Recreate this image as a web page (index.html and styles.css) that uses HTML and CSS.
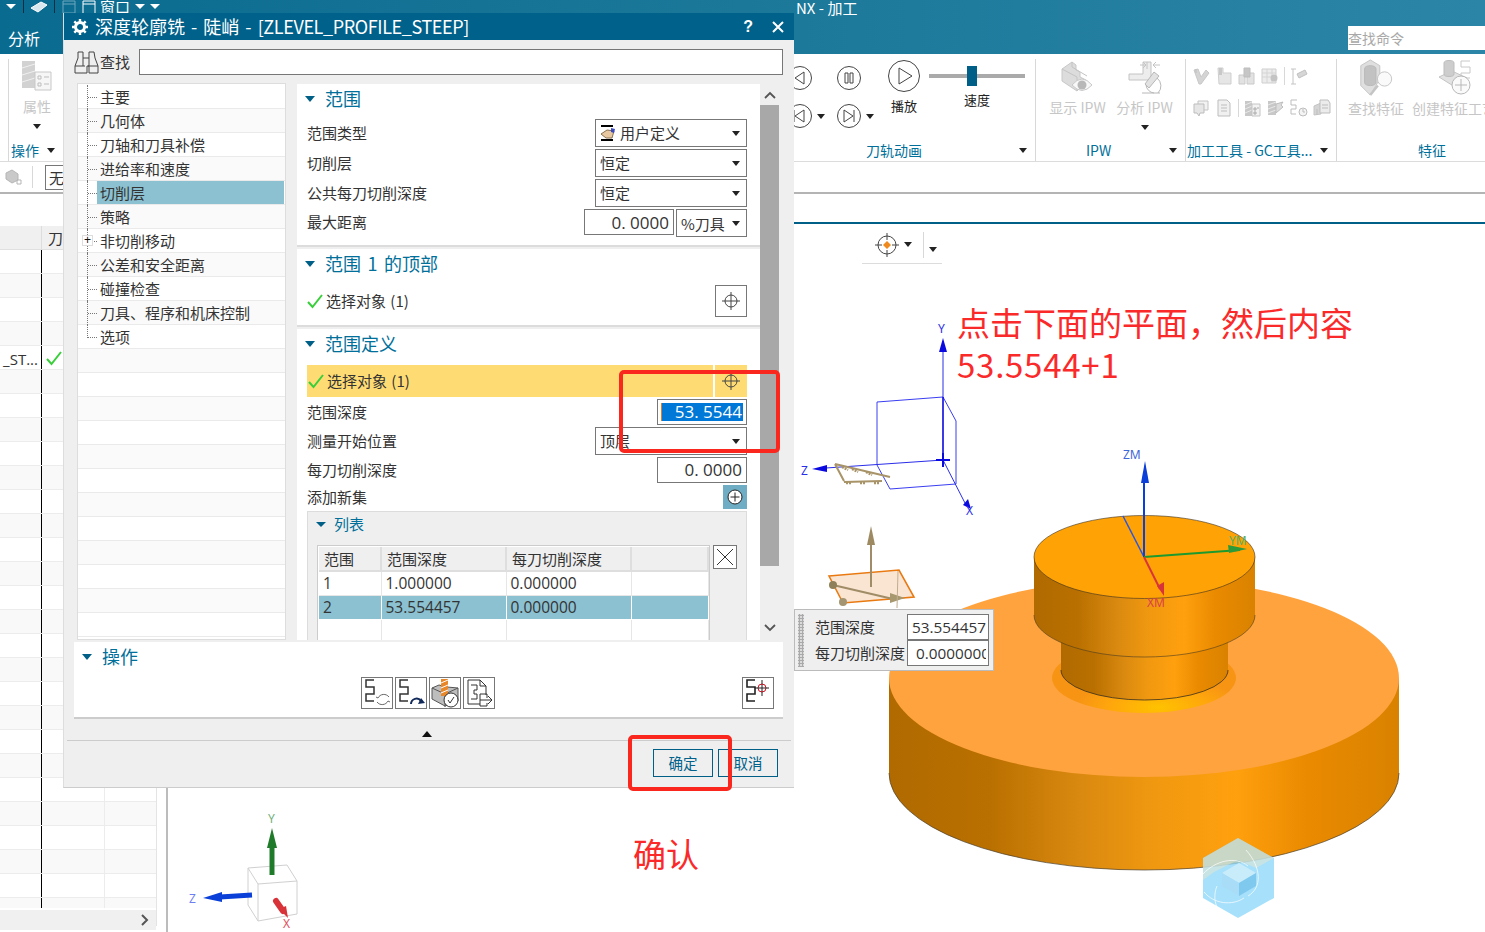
FILE: index.html
```html
<!DOCTYPE html>
<html lang="zh-CN">
<head>
<meta charset="utf-8">
<title>NX - 加工</title>
<link rel="stylesheet" href="styles.css">
</head>
<body>
<svg class="defs" width="0" height="0">
  <defs>
    <symbol id="steps" viewBox="0 0 32 32"><path d="M13 3H5v7h8v7H5v7h8" fill="none" stroke="#333" stroke-width="1.500"/></symbol>
    <symbol id="cross" viewBox="0 0 20 20"><circle cx="10" cy="10" r="6" fill="none" stroke="#444"/><path d="M10 1v18M1 10h18" stroke="#444"/></symbol>
    <symbol id="check" viewBox="0 0 16 16"><path d="M1 9l4.500 5L15 2" fill="none" stroke="#38cf3a" stroke-width="2"/></symbol>
    <symbol id="s-v" viewBox="0 0 18 18"><path d="M2 3l4-1 3 8 5-7 3 3-8 11H7z" fill="#d4d4d4" stroke="#c8c8c8"/><path d="M4 2v4" stroke="#bdbdbd"/></symbol>
    <symbol id="s-box" viewBox="0 0 18 18"><path d="M3 1h5v5h8v11H4z" fill="#e6e6e6" stroke="#cfcfcf"/><path d="M4 1h3v7H4z" fill="#c8c8c8"/></symbol>
    <symbol id="s-tool" viewBox="0 0 18 18"><path d="M1 8h6v9H1zM9 6h7v11H9z" fill="#e2e2e2" stroke="#cacaca"/><path d="M6 1h6v9H6z" fill="#c6c6c6" stroke="#bdbdbd"/></symbol>
    <symbol id="s-grid" viewBox="0 0 18 18"><path d="M1 2h14v14H1z" fill="#ececec" stroke="#cfcfcf"/><path d="M1 6h14M1 10h14M6 2v14M11 2v14" stroke="#d4d4d4"/><circle cx="13" cy="11" r="3.500" fill="#c4c4c4"/></symbol>
    <symbol id="s-pages" viewBox="0 0 18 18"><path d="M6 2h10v9H6z" fill="#f2f2f2" stroke="#c4c4c4"/><path d="M2 5h10v9H8l-1 3-2-3H2z" fill="#e6e6e6" stroke="#bdbdbd"/></symbol>
    <symbol id="s-doc" viewBox="0 0 18 18"><path d="M3 1h9l3 3v13H3z" fill="#f0f0f0" stroke="#bdbdbd"/><path d="M6 6h6M6 9h6M6 12h6" stroke="#bdbdbd"/></symbol>
    <symbol id="s-cyl" viewBox="0 0 18 18"><path d="M1 2h7v15H1z" fill="#c8c8c8"/><path d="M1 6l7-3M1 10l7-3M1 14l7-3" stroke="#e8e8e8"/><path d="M8 5h8v12H8z" fill="#f2f2f2" stroke="#c4c4c4"/><path d="M10 9h2v2h-2zM13 9h2M10 13h2v2h-2z" fill="none" stroke="#aaa"/></symbol>
    <symbol id="s-wrench" viewBox="0 0 18 18"><path d="M1 2h8v14H1z" fill="#c8c8c8"/><path d="M1 6l8-3M1 10l8-3M1 14l8-3" stroke="#e8e8e8"/><path d="M9 5l7-2-2 3 2 2-7 6z" fill="#dcdcdc" stroke="#bdbdbd"/></symbol>
    <symbol id="s-clock" viewBox="0 0 18 18"><path d="M7 1H1v5h5v4H1v5h5" fill="none" stroke="#bdbdbd"/><circle cx="13" cy="13" r="4" fill="#f4f4f4" stroke="#bdbdbd"/><path d="M13 10v3h2" fill="none" stroke="#bdbdbd"/></symbol>
    <symbol id="s-stack" viewBox="0 0 18 18"><path d="M1 7l7-3v11l-7 1z" fill="#d4d4d4" stroke="#c4c4c4"/><path d="M7 1h8l2 3v10H7z" fill="#ececec" stroke="#bdbdbd"/><path d="M9 6h6M9 9h6M4 10v6" stroke="#bdbdbd"/></symbol>
  </defs>
</svg>

<div class="app">
  <header class="titlebar">
    <div class="qat">
      <span class="qat-arrow"></span>
      <span class="qat-sep"></span>
      <svg class="qat-ico" width="20" height="13" viewBox="0 0 20 13"><path d="M2 8l10-6 6 3-9 7z" fill="#d8e8ee" stroke="#fff"/></svg>
      <span class="qat-sep"></span>
      <svg class="qat-ico dim" width="14" height="13" viewBox="0 0 14 13"><path d="M1 1h12v12H1zM1 4h12" fill="none" stroke="#6fa7bd"/></svg>
      <svg class="qat-ico win" width="14" height="13" viewBox="0 0 14 13"><path d="M1 13V1h12v12M1 4h12" fill="none" stroke="#fff"/></svg>
      <span class="qat-text">窗口</span>
      <span class="qat-arrow"></span>
      <span class="qat-arrow"></span>
      <span class="app-title">NX - 加工</span>
    </div>
    <div class="tabrow">
      <span class="tab">分析</span>
      <span class="cmdsearch">查找命令</span>
    </div>
  </header>

  <section class="ribbon">
    <div class="rgroup g-op">
      <div class="rbody col">
        <svg width="32" height="33" viewBox="0 0 32 33"><rect x="1" y="1" width="13" height="27" fill="#d2d2d2"/><path d="M1 8l13-4M1 15l13-4M1 22l13-4" stroke="#f0f0f0"/><path d="M14 12h16v18H14z" fill="#f6f6f6" stroke="#c8c8c8"/><path d="M17 16h3v3h-3zM17 23h3v3h-3zM23 17h5M23 24h5" fill="none" stroke="#bdbdbd"/></svg>
        <span class="rtext">属性</span>
        <span class="tri tri-mid"></span>
      </div>
      <div class="rlabel l-op"><span>操作</span><span class="tri"></span></div>
    </div>
    <div class="rspacer"></div>

    <div class="rgroup g-anim">
      <div class="rbody anim">
        <div class="transport">
          <div class="tcell"><svg class="circ" width="24" height="24" viewBox="0 0 24 24"><circle cx="12" cy="12" r="11.500" fill="none" stroke="#444"/><path d="M7 12l9-6v12z" fill="none" stroke="#444"/></svg></div>
          <div class="tcell"><svg class="circ" width="24" height="24" viewBox="0 0 24 24"><circle cx="12" cy="12" r="11.500" fill="none" stroke="#444"/><path d="M8 7h3v10H8zM13 7h3v10h-3z" fill="none" stroke="#444"/></svg></div>
          <div class="tcell"><svg class="circ" width="24" height="24" viewBox="0 0 24 24"><circle cx="12" cy="12" r="11.500" fill="none" stroke="#444"/><path d="M7 12l9-6v12zM6 6v12" fill="none" stroke="#444"/></svg><span class="tri"></span></div>
          <div class="tcell"><svg class="circ" width="24" height="24" viewBox="0 0 24 24"><circle cx="12" cy="12" r="11.500" fill="none" stroke="#444"/><path d="M7 6l9 6-9 6zM17 6v12" fill="none" stroke="#444"/></svg><span class="tri"></span></div>
        </div>
        <div class="play">
          <svg width="32" height="32" viewBox="0 0 32 32"><circle cx="16" cy="16" r="15.500" fill="none" stroke="#444"/><path d="M11 8l13 8-13 8z" fill="none" stroke="#444"/></svg>
          <span class="rtext dark">播放</span>
        </div>
        <div class="speed">
          <div class="slider"><span class="thumb"></span></div>
          <span class="rtext dark">速度</span>
        </div>
      </div>
      <div class="rlabel l-anim"><span>刀轨动画</span><span class="tri"></span></div>
    </div>

    <div class="rgroup g-ipw">
      <div class="rbody items">
        <div class="ritem">
          <svg width="36" height="36" viewBox="0 0 36 36"><path d="M2 9L12 2l4 3v5l4 2v5l6 3-9 11L2 21z" fill="#dcdcdc" stroke="#c8c8c8"/><path d="M2 9l15 8v14M12 2v5l15 9" fill="none" stroke="#c4c4c4"/><path d="M12 25q10-12 20 0q-10 11-20 0z" fill="#f8f8f8" stroke="#c8c8c8"/><circle cx="22" cy="25" r="4.500" fill="#b8b8b8"/></svg>
          <span class="rtext">显示 IPW</span>
        </div>
        <div class="ritem">
          <svg width="36" height="36" viewBox="0 0 36 36"><path d="M2 14h14V2h8v18H2z" fill="#ededed" stroke="#c4c4c4"/><path d="M20 2v7M13 5h6M26 5h7M29 2l-3 3 3 3M16 2l3 3-3 3" fill="none" stroke="#c4c4c4"/><path d="M27 12l5 4-10 12-4-4z" fill="#e2e2e2" stroke="#b8b8b8"/><path d="M15 33h18M19 25a9 9 0 0 0 8 8M30 18a10 10 0 0 1 1 15" fill="none" stroke="#b8b8b8"/></svg>
          <span class="rtext">分析 IPW</span>
          <span class="tri tri-mid"></span>
        </div>
      </div>
      <div class="rlabel l-ipw"><span>IPW</span><span class="tri"></span></div>
    </div>

    <div class="rgroup g-tools">
      <div class="rbody tools">
        <div class="toolrow">
          <svg width="18" height="18"><use href="#s-v"/></svg>
          <svg width="18" height="18"><use href="#s-box"/></svg>
          <svg width="18" height="18"><use href="#s-tool"/></svg>
          <svg width="18" height="18"><use href="#s-grid"/></svg>
          <span class="toolsep"></span>
          <svg width="18" height="18" viewBox="0 0 18 18"><path d="M3 2v15M1 2h5M1 17h5" stroke="#c4c4c4" fill="none"/><path d="M7 7l8-4 2 4-8 4z" fill="#d6d6d6" stroke="#c0c0c0"/></svg>
        </div>
        <div class="toolrow">
          <svg width="18" height="18"><use href="#s-pages"/></svg>
          <svg width="18" height="18"><use href="#s-doc"/></svg>
          <span class="toolsep"></span>
          <svg width="18" height="18"><use href="#s-cyl"/></svg>
          <svg width="18" height="18"><use href="#s-wrench"/></svg>
          <svg width="18" height="18"><use href="#s-clock"/></svg>
          <svg width="18" height="18"><use href="#s-stack"/></svg>
        </div>
      </div>
      <div class="rlabel l-tools"><span>加工工具 - GC工具...</span><span class="tri"></span></div>
    </div>

    <div class="rgroup g-feat">
      <div class="rbody items">
        <div class="ritem feat">
          <svg class="shift-a" width="36" height="40" viewBox="0 0 36 40"><path d="M2 7l10-6 10 6v14l-10 17L2 28z" fill="#dfdfdf" stroke="#c4c4c4"/><path d="M6 10a6 3 0 0 1 12 0v15a6 3 0 0 1-12 0z" fill="#c2c2c2" stroke="#b8b8b8"/><path d="M12 38l8-10" stroke="#c4c4c4" stroke-width="2.500"/><circle cx="27" cy="21" r="7.500" fill="#fafafa" stroke="#c4c4c4"/></svg>
          <span class="rtext">查找特征</span>
        </div>
        <div class="ritem feat">
          <svg class="shift" width="40" height="36" viewBox="0 0 40 36"><path d="M1 17l13-6 15 7-12 9z" fill="#e2e2e2" stroke="#c4c4c4"/><path d="M6 3a5 2.500 0 0 1 10 0v11a5 2.500 0 0 1-10 0z" fill="#cdcdcd" stroke="#bdbdbd"/><path d="M32 1h-9v6h9v6h-9v5h9" fill="none" stroke="#c8c8c8"/><circle cx="23" cy="25" r="9" fill="#fafafa" stroke="#b8b8b8"/><path d="M23 19v12M17 25h12" stroke="#b8b8b8"/></svg>
          <span class="rtext">创建特征工艺</span>
        </div>
      </div>
      <div class="rlabel l-feat"><span>特征</span></div>
    </div>
  </section>

  <div class="subbar">
    <svg width="18" height="18" viewBox="0 0 18 18"><path d="M2 5l6-3 6 4v6l-6 3-6-4z" fill="#c9c9c9" stroke="#b5b5b5"/><path d="M13 12h4v4h-4z" fill="none" stroke="#b5b5b5"/></svg>
    <span class="subsep"></span>
    <span class="subselect">无</span>
  </div>

  <main class="main">
    <aside class="navwrap">
      <div class="nav">
        <div class="navhead"><span class="c1"></span><span class="c2">刀</span></div>
        <div class="navrows">
          <div class="nrow"><span class="c1"></span><span class="c2"></span></div>
          <div class="nrow alt"><span class="c1"></span><span class="c2"></span></div>
          <div class="nrow"><span class="c1"></span><span class="c2"></span></div>
          <div class="nrow alt"><span class="c1"></span><span class="c2"></span></div>
          <div class="nrow"><span class="c1 trunc">_ST...</span><span class="c2"><svg class="navcheck" width="16" height="16"><use href="#check"/></svg></span></div>
          <div class="nrow alt"><span class="c1"></span><span class="c2"></span></div>
          <div class="nrow"><span class="c1"></span><span class="c2"></span></div>
          <div class="nrow alt"><span class="c1"></span><span class="c2"></span></div>
          <div class="nrow"><span class="c1"></span><span class="c2"></span></div>
          <div class="nrow alt"><span class="c1"></span><span class="c2"></span></div>
          <div class="nrow"><span class="c1"></span><span class="c2"></span></div>
          <div class="nrow alt"><span class="c1"></span><span class="c2"></span></div>
          <div class="nrow"><span class="c1"></span><span class="c2"></span></div>
          <div class="nrow alt"><span class="c1"></span><span class="c2"></span></div>
          <div class="nrow"><span class="c1"></span><span class="c2"></span></div>
          <div class="nrow alt"><span class="c1"></span><span class="c2"></span></div>
          <div class="nrow"><span class="c1"></span><span class="c2"></span></div>
          <div class="nrow alt"><span class="c1"></span><span class="c2"></span></div>
          <div class="nrow"><span class="c1"></span><span class="c2"></span></div>
          <div class="nrow alt"><span class="c1"></span><span class="c2"></span></div>
          <div class="nrow"><span class="c1"></span><span class="c2"></span></div>
          <div class="nrow alt"><span class="c1"></span><span class="c2"></span></div>
          <div class="nrow"><span class="c1"></span><span class="c2"></span></div>
          <div class="nrow alt"><span class="c1"></span><span class="c2"></span></div>
          <div class="nrow"><span class="c1"></span><span class="c2"></span></div>
          <div class="nrow alt"><span class="c1"></span><span class="c2"></span></div>
          <div class="nrow"><span class="c1"></span><span class="c2"></span></div>
          <div class="nrow alt"><span class="c1"></span><span class="c2"></span></div>
        </div>
        <div class="hscroll"><svg width="10" height="12" viewBox="0 0 10 12"><path d="M2 1l5 5-5 5" fill="none" stroke="#555" stroke-width="2"/></svg></div>
      </div>
    </aside>

    <div class="gfx">
      <div class="gfxtools">
        <svg width="24" height="24" viewBox="0 0 24 24"><circle cx="12" cy="12" r="9" fill="none" stroke="#444"/><path d="M12 0v7M12 17v7M0 12h7M17 12h7" stroke="#444"/><path d="M12 8l4 4-4 4-4-4z" fill="#f08a1c"/></svg>
        <span class="tri"></span>
        <span class="gfxsep"></span>
        <span class="tri tri-low"></span>
      </div>

      <svg class="scene" width="1317" height="708" viewBox="168 224 1317 708">
        <defs>
          <linearGradient id="body" x1="0" x2="1" y1="0" y2="0">
            <stop offset="0" stop-color="#b06a00"/>
            <stop offset=".2" stop-color="#ba7000"/>
            <stop offset=".38" stop-color="#da8a10"/>
            <stop offset=".52" stop-color="#f09810"/>
            <stop offset=".68" stop-color="#ffa00e"/>
            <stop offset=".82" stop-color="#ea8a00"/>
            <stop offset="1" stop-color="#d98200"/>
          </linearGradient>
          <radialGradient id="fillet" cx=".58" cy=".92" r=".45">
            <stop offset="0" stop-color="#ffc200"/>
            <stop offset=".6" stop-color="#ffa60c"/>
            <stop offset="1" stop-color="#f79414"/>
          </radialGradient>
        </defs>

        <!-- part -->
        <path d="M889 678V773A255 97 0 0 0 1399 773V678Z" fill="url(#body)"/>
        <path d="M889 773A255 97 0 0 0 1399 773" fill="none" stroke="#4a4030" stroke-width=".7"/>
        <ellipse cx="1144" cy="678" rx="255" ry="99" fill="#ffa33e"/>
        <ellipse cx="1144" cy="678" rx="92" ry="35" fill="url(#fillet)"/>
        <path d="M1061 630V670A83.500 30 0 0 0 1228 670V630Z" fill="url(#body)"/>
        <path d="M1061 670A83.500 30 0 0 0 1228 670" fill="none" stroke="#3a3020" stroke-width=".8"/>
        <path d="M1034 557V615A110.500 42 0 0 0 1255 615V557Z" fill="url(#body)"/>
        <path d="M1034 615A110.500 42 0 0 0 1255 615" fill="none" stroke="#4a3a20" stroke-width=".6"/>
        <ellipse cx="1144.500" cy="557" rx="110.500" ry="41.500" fill="#ffa206" stroke="#3a3020" stroke-width=".6"/>

        <!-- work coordinate system -->
        <path d="M1144 557L1123 516" stroke="#2a55e0" stroke-width="1.500"/>
        <path d="M1144 557V480" stroke="#0a3fd8" stroke-width="2"/>
        <path d="M1145 461l-4 22h8z" fill="#0a3fd8"/>
        <path d="M1144 557L1240 550" stroke="#1d9a2e" stroke-width="2"/>
        <path d="M1247 549l-19-4 1 8z" fill="#2d9a3a"/>
        <path d="M1144 557L1160 589" stroke="#d9333a" stroke-width="2"/>
        <path d="M1164 596l-7-10 7-4z" fill="#d9333a"/>
        <text class="axis ax-b" x="1123" y="459">ZM</text>
        <text class="axis ax-g" x="1229" y="545">YM</text>
        <text class="axis ax-r" x="1147" y="607">XM</text>

        <!-- csys wireframe -->
        <path d="M877 465V402L943 397L956 421V484L890 489L877 465" fill="none" stroke="#3a3ef0"/>
        <path d="M826 468L943 460M943 460L966 505M943 397V352" fill="none" stroke="#2a2ee8"/>
        <path d="M943 397V460" stroke="#0a0ae0" stroke-width="1.600"/>
        <path d="M936 460h14M943 453v14" stroke="#0a0ae0" stroke-width="2"/>
        <path d="M943 338l-4 14h8z" fill="#0a0ae0"/>
        <path d="M812 469l15-4v7z" fill="#0a0ae0"/>
        <path d="M971 509l-8-4 5-6z" fill="#0a0ae0"/>
        <text class="axis ax-b2" x="938" y="333">Y</text>
        <text class="axis ax-b2" x="801" y="475">Z</text>
        <text class="axis ax-b2" x="966" y="515">X</text>
        <path d="M835 464L890 477M835 464L844 481M844 482L882 481" fill="none" stroke="#a89468" stroke-width="2"/>
        <path d="M842 467l6 3M852 469l6 3M866 472l6 3M846 483h6M860 483h6M874 483h5" stroke="#a89468" stroke-width="2.500" stroke-dasharray="2 1"/>

        <!-- plane handle -->
        <path d="M829 576L899 570L914 597L843 603Z" fill="#fae5d3" stroke="#e97a12" stroke-width="1.600"/>
        <path d="M871 587V545" stroke="#a08c66" stroke-width="2"/>
        <path d="M871 526l-4 19h8z" fill="#9d8a62"/>
        <path d="M833 585L893 599" stroke="#a08c66" stroke-width="2"/>
        <path d="M905 598l-15-5v10z" fill="#a89870"/>
        <circle cx="833" cy="585" r="4" fill="#8f7f58"/>
        <circle cx="843" cy="602" r="4" fill="#a39572"/>
        <path d="M898 571L897 608" stroke="#c0ad90" fill="none"/>

        <!-- watermark -->
        <polygon points="1238,838 1274,858 1274,898 1238,918 1203,898 1203,858" fill="#8ed7f8" fill-opacity=".78"/>
        <path d="M1203 858L1238 838 1274 858 1256 868 1238 860 1214 872 1203 880Z" fill="#f2e6c8" fill-opacity=".45"/>
        <path d="M1203 874C1216 860 1236 856 1248 866M1246 850C1262 868 1262 888 1248 896M1204 892C1214 904 1232 906 1244 898M1217 886C1212 898 1216 912 1226 916" fill="none" stroke="#fff" stroke-opacity=".7"/>
        <polygon points="1239,863 1256,873 1239,883 1222,873" fill="#c9ecfb"/>
        <polygon points="1222,873 1239,883 1239,896 1222,886" fill="#a8dcf7"/>
        <polygon points="1256,873 1239,883 1239,896 1256,886" fill="#7fc9ef"/>

        <!-- triad -->
        <path d="M248 868L287 865 297 881V914L258 921 248 905Z" fill="#fff" stroke="#d0d0d0"/>
        <path d="M248 868L258 884 297 881M258 884V921" fill="none" stroke="#d0d0d0"/>
        <path d="M272 875V848" stroke="#1f7a2a" stroke-width="5"/>
        <path d="M272 828l-5 20h10z" fill="#1f7a2a"/>
        <path d="M252 895L220 897" stroke="#0a3fd8" stroke-width="5"/>
        <path d="M203 898l19-6v10z" fill="#0a3fd8"/>
        <path d="M276 901L283 911" stroke="#d9333a" stroke-width="6" stroke-linecap="round"/>
        <path d="M288 918l-9-9 7-3z" fill="#d9333a"/>
        <text class="axis ax-tg" x="268" y="823">Y</text>
        <text class="axis ax-tb" x="189" y="903">Z</text>
        <text class="axis ax-tr" x="283" y="928">X</text>
      </svg>
    </div>
  </main>
</div>

<!-- dialog -->
<section class="dialog">
  <div class="dlgtitle">
    <svg class="gear" width="16" height="16" viewBox="0 0 16 16"><circle cx="8" cy="8" r="4.500" fill="none" stroke="#fff" stroke-width="3"/><path d="M8 0v3M8 13v3M0 8h3M13 8h3M2.300 2.300l2 2M11.700 11.700l2 2M13.700 2.300l-2 2M4.300 11.700l-2 2" stroke="#fff" stroke-width="2.400"/></svg>
    <span class="dlgname">深度轮廓铣 - 陡峭 - <span class="latin">[ZLEVEL_PROFILE_STEEP]</span></span>
    <span class="dlghelp">?</span>
    <svg width="14" height="14" viewBox="0 0 14 14"><path d="M2 2l10 10M12 2L2 12" stroke="#fff" stroke-width="2"/></svg>
  </div>

  <div class="dlgsearch">
    <svg width="25" height="24" viewBox="0 0 25 24"><path d="M4 2h5v6h6V2h5l1 6 3 8v7h-9v-7h-2v7H1v-7l3-8zM1 16h10M14 16h10M9 8v8M15 8v8" fill="none" stroke="#444"/></svg>
    <span class="dlgfind">查找</span>
    <span class="dlginput"></span>
  </div>

  <div class="dlgbody">
    <div class="tree">
      <div class="trow"><span class="twig"></span><span class="tlabel">主要</span></div>
      <div class="trow alt"><span class="twig"></span><span class="tlabel">几何体</span></div>
      <div class="trow"><span class="twig"></span><span class="tlabel">刀轴和刀具补偿</span></div>
      <div class="trow alt"><span class="twig"></span><span class="tlabel">进给率和速度</span></div>
      <div class="trow"><span class="twig"></span><span class="tlabel selected">切削层</span></div>
      <div class="trow alt"><span class="twig"></span><span class="tlabel">策略</span></div>
      <div class="trow"><span class="twig"><span class="plus">+</span></span><span class="tlabel">非切削移动</span></div>
      <div class="trow alt"><span class="twig"></span><span class="tlabel">公差和安全距离</span></div>
      <div class="trow"><span class="twig"></span><span class="tlabel">碰撞检查</span></div>
      <div class="trow alt"><span class="twig"></span><span class="tlabel">刀具、程序和机床控制</span></div>
      <div class="trow"><span class="twig last"></span><span class="tlabel">选项</span></div>
      <div class="trow alt"></div><div class="trow"></div><div class="trow alt"></div><div class="trow"></div>
      <div class="trow alt"></div><div class="trow"></div><div class="trow alt"></div><div class="trow"></div>
      <div class="trow alt"></div><div class="trow"></div><div class="trow alt"></div><div class="trow"></div>
    </div>

    <div class="pane">
      <div class="sect">
        <h3 class="secthead first"><span class="disc"></span>范围</h3>
        <div class="frow"><span>范围类型</span>
          <span class="sel w152"><svg class="selico" width="16" height="16" viewBox="0 0 16 16"><path d="M1 1h12M1 15h12" stroke="#000" stroke-width="2"/><path d="M1 9l6-4 7 1-2 7H6z" fill="#e8c8a0" stroke="#8a7050"/><path d="M11 3l4 1-1 4-3-1z" fill="#3a4bc0"/></svg><span class="seltext">用户定义</span><span class="tri"></span></span></div>
        <div class="frow"><span>切削层</span><span class="sel w152"><span class="seltext">恒定</span><span class="tri"></span></span></div>
        <div class="frow"><span>公共每刀切削深度</span><span class="sel w152"><span class="seltext">恒定</span><span class="tri"></span></span></div>
        <div class="frow last"><span>最大距离</span>
          <span class="pair"><span class="num w90">0. 0000</span><span class="sel w71"><span class="seltext">%刀具</span><span class="tri"></span></span></span></div>
      </div>

      <div class="sect">
        <h3 class="secthead"><span class="disc"></span>范围 1 的顶部</h3>
        <div class="frow pick"><span class="picklabel"><svg width="16" height="16"><use href="#check"/></svg>选择对象 (1)</span>
          <span class="pickbtn"><svg width="20" height="20"><use href="#cross"/></svg></span></div>
      </div>

      <div class="sect open">
        <h3 class="secthead"><span class="disc"></span>范围定义</h3>
        <div class="yellow">
          <span class="picklabel grow"><svg width="16" height="16"><use href="#check"/></svg>选择对象 (1)</span>
          <span class="ybtn"><svg width="20" height="20"><use href="#cross"/></svg></span>
        </div>
        <div class="frow r26"><span>范围深度</span><span class="num w90 active"><span class="selection">53. 5544</span></span></div>
        <div class="frow"><span>测量开始位置</span><span class="sel w152"><span class="seltext">顶层</span><span class="tri"></span></span></div>
        <div class="frow r26"><span>每刀切削深度</span><span class="num w90">0. 0000</span></div>
        <div class="frow r24"><span>添加新集</span>
          <span class="addbtn"><svg width="16" height="16" viewBox="0 0 16 16"><circle cx="8" cy="8" r="7" fill="#fff" stroke="#222"/><path d="M8 3.500v9M3.500 8h9" stroke="#222"/></svg></span></div>

        <div class="listbox">
          <h4 class="listhead"><span class="disc small"></span>列表</h4>
          <div class="listinner">
            <div class="tblwrap">
              <table class="tbl">
                <thead><tr><th>范围</th><th>范围深度</th><th>每刀切削深度</th><th></th></tr></thead>
                <tbody>
                  <tr><td>1</td><td>1.000000</td><td>0.000000</td><td></td></tr>
                  <tr class="on"><td>2</td><td>53.554457</td><td>0.000000</td><td></td></tr>
                  <tr><td></td><td></td><td></td><td></td></tr>
                </tbody>
              </table>
            </div>
            <span class="delbtn"><svg width="20" height="20" viewBox="0 0 20 20"><path d="M2 2l16 16M18 2L2 18" stroke="#333"/></svg></span>
          </div>
        </div>
      </div>
    </div>

    <div class="vscroll">
      <svg class="chev" width="12" height="8" viewBox="0 0 12 8"><path d="M1 7l5-5 5 5" fill="none" stroke="#555" stroke-width="1.800"/></svg>
      <span class="vthumb"></span>
      <svg class="chev" width="12" height="8" viewBox="0 0 12 8"><path d="M1 1l5 5 5-5" fill="none" stroke="#555" stroke-width="1.800"/></svg>
    </div>
  </div>

  <div class="ops">
    <h3 class="secthead"><span class="disc"></span>操作</h3>
    <div class="opsrow">
      <span class="opbtn"><svg width="32" height="32"><use href="#steps"/><path d="M28 20a6.500 6.500 0 0 0-11 1l-2-1M16 25a6.500 6.500 0 0 0 11-1l2 1" fill="none" stroke="#666"/></svg></span>
      <span class="opbtn"><svg width="32" height="32"><use href="#steps"/><path d="M16 27a5.500 5.500 0 0 1 10-3" fill="none" stroke="#122a5a" stroke-width="2"/><path d="M30 26l-7 1 3-6z" fill="#122a5a"/></svg></span>
      <span class="opbtn"><svg width="32" height="32" viewBox="0 0 32 32"><path d="M3 11l7-3 8 2 11 1v13l-13 5-13-7z" fill="#bdbdbd" stroke="#555"/><path d="M3 11l13 6v13M16 17l13-6" fill="none" stroke="#555"/><rect x="12" y="2" width="7" height="17" fill="#e8862a"/><path d="M12 6l7-3M12 11l7-3M12 16l7-3" stroke="#fff"/><circle cx="22" cy="23" r="7" fill="#fff" stroke="#333"/><path d="M19 23l2 3 4-6" fill="none" stroke="#333"/></svg></span>
      <span class="opbtn"><svg width="32" height="32" viewBox="0 0 32 32"><path d="M5 3h12l6 6v9M5 3v24h12" fill="none" stroke="#333"/><path d="M17 3v6h6M8 8h6v5h-3v4h3v5H8" fill="none" stroke="#333"/><path d="M17 17v12h7v-3M17 17h7v4M17 23h11M25 19l4 4-4 4" fill="none" stroke="#333"/></svg></span>
      <span class="opbtn endbtn"><svg width="32" height="32" viewBox="0 0 32 32"><path d="M13 3H5v7h8v7H5v7h8" fill="none" stroke="#222" stroke-width="1.600"/><circle cx="20" cy="11" r="4" fill="none" stroke="#e01020"/><path d="M20 3v16M13 11h14" stroke="#222"/></svg></span>
    </div>
  </div>

  <div class="collapse"><span class="uptri"></span></div>
  <div class="dlgfoot">
    <button class="btn" type="button">确定</button>
    <button class="btn" type="button">取消</button>
  </div>
</section>

<!-- on-canvas parameter box -->
<section class="hud">
  <span class="grip"></span>
  <div class="hudgrid">
    <span class="hudlabel">范围深度</span><span class="hudval">53.554457</span>
    <span class="hudlabel">每刀切削深度</span><span class="hudval clip"><span class="clipbox">0.0000000</span></span>
  </div>
</section>

<!-- annotations -->
<p class="note note-main">点击下面的平面，然后内容<br><span class="formula">53.5544+1</span></p>
<p class="note note-ok">确认</p>
<span class="mark mark-depth"></span>
<span class="mark mark-ok"></span>
</body>
</html>
```

FILE: styles.css
```css
* { box-sizing: border-box; }
html, body { margin: 0; padding: 0; }
body {
  position: relative;
  width: 1485px;
  height: 932px;
  overflow: hidden;
  background: #fff;
  color: #333;
  font-family: "Noto Sans CJK SC", "Noto Sans", sans-serif;
  font-size: 15px;
  line-height: 20px;
}
.defs { position: absolute; }
svg { display: block; flex: none; }
h3, h4, p { margin: 0; font-weight: 400; }

.app { display: flex; flex-direction: column; height: 932px; }

/* title bar */
.titlebar {
  height: 54px;
  flex: none;
  background: linear-gradient(90deg, #0a6b90, #1b7899 50%, #2b85a7);
  color: #fff;
  overflow: hidden;
}
.qat { display: flex; align-items: flex-start; height: 26px; }
.qat-arrow {
  width: 0; height: 0;
  margin: 4px 0 0 5px;
  border: 5px solid transparent;
  border-top: 5px solid #fff;
  border-bottom: 0;
}
.qat .qat-arrow:first-child { margin-left: 6px; }
.qat-sep { width: 1px; height: 13px; background: #0a2f40; margin: 0 5px; }
.qat-sep:nth-child(2) { margin-left: 7px; }
.qat-ico.dim { margin-left: 2px; }
.qat-ico.win { margin-left: 6px; }
.qat-text { margin-left: 4px; font-size: 15px; line-height: 14px; }
.app-title { margin-left: 636px; font-size: 15px; line-height: 16px; }
.tabrow { display: flex; justify-content: space-between; height: 28px; }
.tab { margin-left: 8px; font-size: 16px; line-height: 24px; }
.cmdsearch {
  width: 137px;
  height: 24px;
  background: #fff;
  color: #a8a8a8;
  font-size: 14px;
  line-height: 24px;
}

/* ribbon */
.ribbon {
  display: flex;
  height: 108px;
  flex: none;
  padding-top: 5px;
  background: #fff;
  border-bottom: 1px solid #dcdcdc;
}
.rgroup { display: flex; flex-direction: column; height: 102px; flex: none; border-right: 1px solid #d8d8d8; }
.rbody { flex: 1; min-height: 0; }
.rlabel {
  display: flex;
  align-items: center;
  height: 20px;
  margin-top: -1px;
  margin-bottom: 1px;
  color: #00709a;
  font-size: 14px;
  white-space: nowrap;
}
.rlabel .tri { margin-left: auto; }
.rspacer { flex: 1; }
.rtext { color: #c6c6c6; font-size: 14px; line-height: 20px; white-space: nowrap; }
.rtext.dark { color: #222; font-size: 13px; }
.tri {
  display: block;
  flex: none;
  width: 0; height: 0;
  border: 4.5px solid transparent;
  border-top: 5px solid #222;
  border-bottom: 0;
}
.tri-mid { margin-top: 8px; }

.g-op { width: 58px; margin-left: 8px; border-right: 0; border-left: 1px solid #d8d8d8; }
.col { display: flex; flex-direction: column; align-items: center; padding-top: 1px; }
.col .rtext { margin-top: 3px; }
.g-op .col { padding-right: 1px; }
.l-op { padding: 0 11px 0 2px; }

.g-anim { width: 242px; }
.anim { display: flex; margin-left: -6px; }
.transport {
  display: grid;
  grid-template-columns: 49px 49px;
  grid-auto-rows: 24px;
  row-gap: 14px;
  padding-top: 7px;
  flex: none;
}
.tcell { display: flex; align-items: center; gap: 5px; }
.play { display: flex; flex-direction: column; align-items: center; width: 32px; margin-left: 2px; padding-top: 1px; flex: none; }
.play .rtext { margin-top: 4px; }
.speed { display: flex; flex-direction: column; align-items: center; width: 96px; margin-left: 9px; padding-top: 7px; flex: none; }
.slider { display: flex; align-items: center; justify-content: center; width: 96px; height: 20px; background: linear-gradient(#aaa, #aaa) center / 100% 4px no-repeat; }
.thumb { width: 10px; height: 20px; background: #005f87; transform: translateX(-5px); }
.speed .rtext { margin-top: 4px; }
.l-anim { padding: 0 8px 0 72px; }

.g-ipw { width: 150px; }
.items { display: flex; padding-left: 8px; }
.ritem { display: flex; flex-direction: column; align-items: center; width: 67px; padding-top: 1px; flex: none; }
.ritem .rtext { margin-top: 1px; }
.l-ipw { padding: 0 8px 0 50px; }

.g-tools { width: 151px; }
.tools { display: flex; flex-direction: column; gap: 14px; padding: 8px 0 0 6px; }
.toolrow { display: flex; align-items: center; gap: 5px; height: 18px; }
.toolsep { width: 1px; height: 18px; background: #d8d8d8; }
.l-tools { padding: 0 8px 0 1px; }

.g-feat { width: 148px; border-right: 0; overflow: hidden; }
.g-feat .items { padding-left: 11px; }
.ritem.feat { width: 64px; align-items: flex-start; padding-top: 0; }
.ritem.feat svg { height: 38px; }
.shift-a { margin-left: 10px; }
.shift { margin-left: 26px; }
.l-feat { padding-left: 81px; }

/* sub toolbar */
.subbar {
  display: flex;
  align-items: center;
  height: 32px;
  flex: none;
  padding-left: 4px;
  border-bottom: 2px solid #b4b4b4;
}
.subsep { width: 1px; height: 22px; margin: 0 12px 0 10px; background: #d8d8d8; }
.subselect { width: 60px; height: 25px; padding-left: 3px; border: 1px solid #777; font-size: 15px; line-height: 23px; }

/* main */
.main { display: flex; flex: 1; min-height: 0; }
.navwrap { width: 168px; flex: none; padding-top: 32px; border-right: 2px solid #bcbcbc; }
.nav { width: 157px; height: 700px; border-right: 1px solid #e4e4e4; }
.navhead { display: flex; height: 24px; background: #f0f0f0; border-bottom: 1px solid #e0e0e0; }
.navhead .c1 { border-right: 1px solid #ddd; }
.navhead .c2 { border: 0; padding-left: 6px; font-size: 15px; line-height: 24px; }
.navrows { height: 658px; overflow: hidden; }
.nrow { display: flex; height: 24px; border-bottom: 1px solid #ececec; }
.nrow.alt { background: #f9f9f9; }
.c1 { width: 42px; flex: none; border-right: 1px solid #000; }
.c2 { width: 63px; flex: none; border-right: 1px solid #ececec; }
.trunc { font-family: "Open Sans", sans-serif; font-size: 15px; line-height: 26px; text-align: right; padding-right: 3px; white-space: nowrap; overflow: hidden; }
.navcheck { margin: 4px 0 0 4px; }
.hscroll { display: flex; align-items: center; justify-content: flex-end; height: 20px; margin-top: 2px; padding-right: 6px; background: #f0f0f0; }

.gfx { position: relative; flex: 1; padding-top: 28px; }
.gfxtools {
  display: flex;
  align-items: center;
  width: 80px;
  height: 40px;
  margin-left: 694px;
  padding: 0 0 0 13px;
  border-top: 2px solid transparent;
  border-bottom: 1px solid #dcdcdc;
  gap: 5px;
}
.gfx::before { content: ""; display: block; height: 2px; background: #005f87; }
.gfxsep { width: 1px; height: 26px; margin-left: 6px; background: #d8d8d8; }
.tri-low { margin-top: 10px; }
.scene { position: absolute; left: 0; top: 30px; }
.axis { font-family: "Noto Sans", sans-serif; font-size: 12px; }
.ax-b { fill: #3f66d8; }
.ax-g { fill: #55b05e; }
.ax-r { fill: #d9414a; }
.ax-b2 { fill: #2a2ee8; }
.ax-tg { fill: #6fb07a; }
.ax-tb { fill: #6f7ff0; }
.ax-tr { fill: #e0505a; }

/* dialog */
.dialog {
  position: absolute;
  left: 63px;
  top: 13px;
  display: flex;
  flex-direction: column;
  width: 731px;
  height: 775px;
  background: #efefef;
  border-bottom: 1px solid #ccc;
  border-left: 1px solid #ddd;
}
.dlgtitle { display: flex; align-items: center; height: 27px; flex: none; padding: 0 9px 0 8px; background: #00618a; color: #fff; }
.gear { margin-right: 7px; }
.dlgname { flex: 1; font-size: 18px; line-height: 27px; white-space: nowrap; word-spacing: 2px; }
.latin { letter-spacing: -0.38px; }
.dlghelp { margin-right: 18px; font-family: "Liberation Sans", sans-serif; font-size: 16px; font-weight: 700; }
.dlgsearch { display: flex; align-items: center; height: 43px; flex: none; padding: 0 10px; }
.dlgfind { width: 40px; padding-left: 1px; font-size: 15px; flex: none; }
.dlginput { flex: 1; height: 26px; margin-right: 1px; background: #fff; border: 1px solid #777; }

.dlgbody { display: flex; height: 557px; flex: none; padding-left: 13px; }
.tree { width: 209px; flex: none; padding-top: 1px; background: #fff; border: 1px solid #ddd; overflow: hidden; }
.trow { display: flex; height: 24px; border-bottom: 1px solid #eaeaea; }
.trow.alt { background: #fafafa; }
.twig {
  position: relative;
  width: 10px;
  height: 24px;
  margin-left: 9px;
  flex: none;
  border-left: 1px dotted #777;
  background: repeating-linear-gradient(90deg, #777 0 1px, transparent 1px 2px) center / 100% 1px no-repeat;
}
.twig.last { height: 13px; background-position: bottom; }
.plus {
  position: absolute;
  left: -6px;
  top: 6px;
  width: 11px;
  height: 11px;
  background: #fff;
  border: 1px solid #ddd;
  font-family: "Liberation Sans", sans-serif;
  font-size: 12px;
  line-height: 8px;
  text-align: center;
  color: #111;
}
.tlabel { flex: 1; height: 23px; margin-right: 1px; padding-left: 3px; font-size: 15px; line-height: 23px; white-space: nowrap; }
.tlabel.selected { background: #8bc1d1; }

.pane { width: 463px; margin-left: 11px; flex: none; overflow: hidden; padding-top: 1px; }
.sect { margin-bottom: 2px; padding: 0 13px 8px 10px; background: #fff; border-bottom: 2px solid #dcdcdc; }
.sect:first-child { height: 163px; }
.sect.open { margin: 0; border: 0; padding-bottom: 0; }
.secthead { display: flex; align-items: center; height: 29px; margin-bottom: 7px; color: #00709a; font-size: 18px; line-height: 29px; word-spacing: 2.500px; }
.secthead.first { margin-bottom: 6px; }
.disc {
  width: 0; height: 0;
  margin: 1px 10px 0 -2px;
  flex: none;
  border: 5.5px solid transparent;
  border-top: 6px solid #005f87;
  border-bottom: 0;
}
.disc.small { margin: 1px 8px 0 -1px; border-width: 5px; border-top-width: 5px; border-bottom-width: 0; }
.frow { display: flex; align-items: center; justify-content: space-between; height: 28px; margin-bottom: 2px; }
.frow.last { margin-bottom: 0; align-items: flex-start; line-height: 25px; }
.frow.r26 { height: 26px; }
.frow.r24 { height: 24px; margin-bottom: 2px; }
.frow.pick { height: 32px; margin: 0; }
.sel { display: flex; align-items: center; height: 28px; padding: 0 6px 0 4px; background: #fff; border: 1px solid #777; }
.w152 { width: 152px; }
.w71 { width: 71px; }
.w90 { width: 90px; }
.selico { margin-right: 4px; }
.seltext { flex: 1; font-size: 15px; white-space: nowrap; }
.pair { display: flex; align-items: flex-start; gap: 2px; height: 28px; }
.num {
  display: flex;
  align-items: center;
  justify-content: flex-end;
  height: 26px;
  padding-right: 4px;
  background: #fff;
  border: 1px solid #777;
  font-family: "Open Sans", sans-serif;
  font-size: 17px;
  white-space: pre;
}
.num.active { padding: 3px; }
.selection { display: flex; align-items: center; justify-content: flex-end; width: 100%; height: 18px; padding-right: 1px; background: #0078d7; border-left: 1px solid #e8791f; color: #fff; }
.picklabel { display: flex; align-items: center; gap: 3px; font-size: 15px; word-spacing: 1px; }
.picklabel.grow { flex: 1; height: 32px; background: #ffdc73; padding-left: 1px; }
.pickbtn { display: flex; align-items: center; justify-content: center; width: 32px; height: 32px; background: #fff; border: 1px solid #777; }
.yellow { display: flex; height: 32px; margin-bottom: 2px; }
.ybtn { display: flex; align-items: center; justify-content: center; width: 32px; margin-left: 2px; background: #ffdc73; }
.addbtn { display: flex; align-items: center; justify-content: center; width: 24px; height: 24px; background: #6fadc4; }

.listbox { height: 140px; padding-left: 9px; background: #efefef; border: 1px solid #dcdcdc; border-bottom: 0; }
.listhead { display: flex; align-items: center; height: 23px; margin-bottom: 10px; color: #00709a; font-size: 15px; line-height: 23px; }
.listinner { display: flex; align-items: flex-start; gap: 3px; }
.tblwrap { width: 393px; height: 110px; flex: none; padding: 1px; background: #fff; border: 1px solid #ccc; border-bottom: 0; overflow: hidden; }
.tbl { width: 390px; border-collapse: collapse; table-layout: fixed; font-size: 15px; }
.tbl th:nth-child(1), .tbl td:nth-child(1) { width: 62px; }
.tbl th:nth-child(2), .tbl td:nth-child(2) { width: 125px; }
.tbl th:nth-child(3), .tbl td:nth-child(3) { width: 125px; }
.tbl th { height: 24px; padding: 0 0 0 5px; background: #efefef; border-right: 2px solid #dedede; border-bottom: 2px solid #dedede; font-weight: 400; font-size: 15px; text-align: left; }
.tbl td { height: 24px; padding: 0 0 0 4px; border-right: 1px solid #e6e6e6; border-bottom: 1px solid #e6e6e6; font-family: "Open Sans", sans-serif; font-size: 15.500px; }
.tbl tr.on td { background: #8bc1d1; border-color: #fff; }
.delbtn { display: flex; align-items: center; justify-content: center; width: 24px; height: 24px; background: #fff; border: 1px solid #777; }

.vscroll { display: flex; flex-direction: column; align-items: center; width: 19px; flex: none; padding-top: 8px; }
.vthumb { width: 19px; height: 461px; margin: 6px 0 58px; background: #a8a8a8; }

.ops { height: 77px; margin: 2px 11px 0 10px; flex: none; padding-left: 10px; background: #fff; border-bottom: 2px solid #ccc; }
.ops .secthead { margin-bottom: 6px; }
.opsrow { display: flex; gap: 2px; padding: 0 9px 0 277px; }
.opbtn { display: block; width: 32px; height: 32px; background: #fff; border: 1px solid #777; }
.opbtn svg { margin: -1px; }
.endbtn { margin-left: auto; }
.collapse { display: flex; justify-content: center; align-items: center; height: 22px; margin: 0 3px; flex: none; padding: 8px 4px 0 0; border-bottom: 1px solid #ccc; }
.uptri { width: 0; height: 0; border: 5.500px solid transparent; border-bottom: 6px solid #111; border-top: 0; }
.dlgfoot { display: flex; justify-content: flex-end; gap: 5px; padding: 8px 16px 0 0; }
.btn { width: 60px; height: 28px; padding: 0; background: #efefef; border: 1px solid #005f87; color: #00618a; font: 400 14.500px/20px "Noto Sans CJK SC", sans-serif; }

/* on-canvas box */
.hud {
  position: absolute;
  left: 794px;
  top: 609px;
  display: flex;
  width: 200px;
  height: 62px;
  padding: 4px 4px 3px 3px;
  background: #efefef;
  border: 1px solid #bbb;
}
.grip { width: 6px; flex: none; background: radial-gradient(circle, #aaa 0 1.200px, transparent 1.500px) 0 0 / 3px 3px; }
.hudgrid { display: grid; grid-template-columns: 92px 82px; grid-template-rows: 26px 26px; margin-left: 11px; flex: 1; }
.hudlabel { font-size: 15px; line-height: 26px; white-space: nowrap; }
.hudval { padding-left: 4px; background: #fff; border: 1px solid #777; font-family: "Open Sans", sans-serif; font-size: 15.300px; line-height: 24px; white-space: nowrap; overflow: hidden; }
.hudval.clip { padding-left: 8px; }
.clipbox { display: block; width: 70px; overflow: hidden; }

/* annotations */
.note { position: absolute; color: #fb2a2a; font-size: 33px; line-height: 42px; white-space: nowrap; }
.note-main { left: 957px; top: 301px; }
.note-ok { left: 633px; top: 832px; }
.formula { letter-spacing: 0.75px; }
.mark { position: absolute; border: 4px solid #f9271d; border-radius: 5px; }
.mark-depth { left: 619px; top: 370px; width: 161px; height: 83px; }
.mark-ok { left: 628px; top: 735px; width: 104px; height: 56px; }
```
